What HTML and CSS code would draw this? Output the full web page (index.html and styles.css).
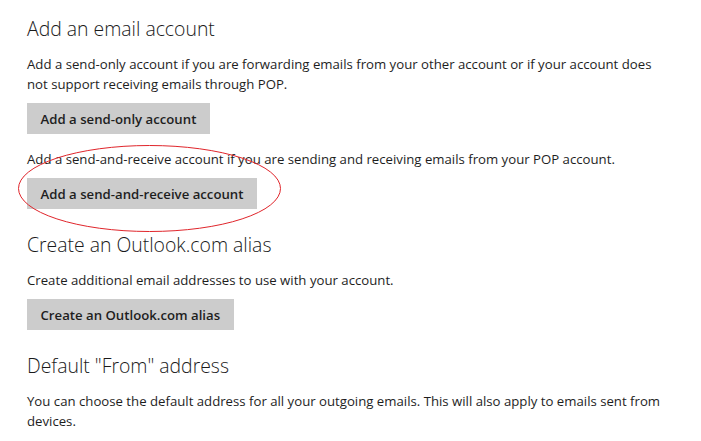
FILE: index.html
```html
<!DOCTYPE html>
<html>
<head>
<meta charset="utf-8">
<link rel="stylesheet" href="styles.css">
</head>
<body>
<main class="page">
  <section class="group">
    <h2 class="title">Add an email account</h2>
    <p class="text">Add a send-only account if you are forwarding emails from your other account or if your account does not support receiving emails through POP.</p>
    <button class="btn">Add a send-only account</button>
    <p class="text after-btn">Add a send-and-receive account if you are sending and receiving emails from your POP account.</p>
    <button class="btn">Add a send-and-receive account</button>
  </section>
  <section class="group">
    <h2 class="title">Create an Outlook.com alias</h2>
    <p class="text">Create additional email addresses to use with your account.</p>
    <button class="btn">Create an Outlook.com alias</button>
  </section>
  <section class="group last">
    <h2 class="title">Default "From" address</h2>
    <p class="text">You can choose the default address for all your outgoing emails. This will also apply to emails sent from devices.</p>
  </section>
  <svg class="mark" width="265" height="89" viewBox="0 0 265 89">
    <ellipse cx="132.5" cy="44.5" rx="131" ry="43" fill="none" stroke="#e0252b" stroke-width="1"/>
  </svg>
</main>
</body>
</html>
```
FILE: styles.css
```css
html, body {
  margin: 0;
  padding: 0;
  background: #ffffff;
}
.page {
  position: relative;
  padding: 15px 0 0 27px;
  width: 640px;
  font-family: "Open Sans", "Noto Sans", sans-serif;
  color: #1e1e1e;
}
.group {
  display: flex;
  flex-direction: column;
  align-items: flex-start;
  margin-bottom: 22px;
}
.title {
  margin: 0 0 11px;
  font-size: 19.4px;
  line-height: 28px;
  font-weight: 300;
  color: #1a1a1a;
}
.text {
  margin: 0 0 9px;
  font-size: 13.2px;
  line-height: 20px;
}
.after-btn {
  margin-top: 15px;
}
.btn {
  border: 0;
  margin: 0;
  background: #cccccc;
  height: 31px;
  padding: 0 13.5px;
  font-family: "Open Sans", "Noto Sans", sans-serif;
  font-size: 13.2px;
  font-weight: 600;
  color: #1e1e1e;
}
.mark {
  position: absolute;
  left: 17px;
  top: 144px;
}
```
